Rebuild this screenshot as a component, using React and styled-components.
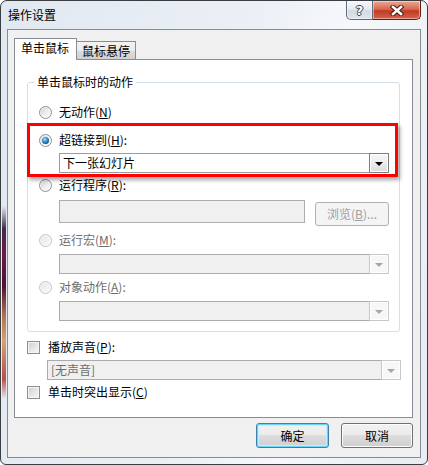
import styled, { createGlobalStyle } from 'styled-components'

const GlobalStyle = createGlobalStyle`
  html, body {
    margin: 0;
    padding: 0;
    background: #fff;
  }
  body {
    font-family: "Noto Sans CJK SC", "Microsoft YaHei", sans-serif;
    font-size: 12px;
    color: #000;
  }
  * { box-sizing: border-box; }
`

const Window = styled.div`
  width: 428px;
  height: 465px;
  border: 1px solid #3a3d42;
  border-radius: 7px 7px 6px 6px;
  padding: 0 6px 6px;
  display: flex;
  flex-direction: column;
  overflow: hidden;
  background:
    linear-gradient(
      to bottom,
      rgba(60, 40, 70, 0) 205px,
      #3f2c4c 228px,
      #6c1b48 252px,
      #4e1232 285px,
      #b27352 315px,
      #d6a173 340px,
      #b9504a 378px,
      rgba(230, 236, 243, 0) 398px
    ) 1px 0 / 4px 100% no-repeat,
    linear-gradient(100deg, #e1e8f0 0%, #ebf0f6 50%, #f6f8fb 70%, #e6ecf3 100%);
`

const TitleBar = styled.div`
  height: 28px;
  display: flex;
  align-items: flex-start;
`

const Title = styled.div`
  padding-left: 1px;
  line-height: 28px;
  font-size: 12px;
`

const Captions = styled.div`
  margin-left: auto;
  display: flex;
  height: 19px;
`

const CaptionButton = styled.div`
  width: ${p => p.$w}px;
  height: 19px;
  display: flex;
  align-items: center;
  justify-content: center;
  border: 1px solid ${p => (p.$close ? '#5c1f14' : '#5f6b7a')};
  border-top: none;
  border-left: ${p => (p.$close ? 'none' : '1px solid #5f6b7a')};
  border-radius: ${p => (p.$close ? '0 0 5px 0' : '0 0 0 5px')};
  background: ${p =>
    p.$close
      ? 'linear-gradient(#e9a996 0%, #d86a50 45%, #c23b22 55%, #d4634a 100%)'
      : 'linear-gradient(#f6f8fb 0%, #e6eaf0 45%, #d3dae3 55%, #dfe5ec 100%)'};
  box-shadow: inset 0 0 0 1px rgba(255, 255, 255, 0.45);
`

const HelpGlyph = styled.span`
  font-family: "DejaVu Sans", sans-serif;
  font-weight: bold;
  font-size: 13px;
  line-height: 13px;
  color: #fff;
  text-shadow: 1px 0 #3b4450, -1px 0 #3b4450, 0 1px #3b4450, 0 -1px #3b4450;
`

const Client = styled.div`
  flex: 1;
  border: 1px solid #878c93;
  background: #f0f0f0;
  padding: 8px 7px 0 6px;
  display: flex;
  flex-direction: column;
`

const TabRow = styled.div`
  display: flex;
  align-items: flex-end;
  position: relative;
  z-index: 1;
  margin-bottom: -1px;
`

const Tab = styled.div`
  position: relative;
  border: 1px solid #898c95;
  border-bottom: none;
  line-height: 16px;
  white-space: nowrap;
  ${p =>
    p.$active
      ? `
    z-index: 2;
    height: 22px;
    padding: 1px 7px 0 6px;
    background: #fff;
  `
      : `
    height: 18px;
    margin-left: -1px;
    margin-bottom: 1px;
    padding: 1px 5px 0 5px;
    background: linear-gradient(#f3f3f3 0%, #ebebeb 50%, #dddddd 51%, #cfcfcf 100%);
  `}
`

const Panel = styled.div`
  background: #fff;
  border: 1px solid #898c95;
  padding: 0 12px 15px;
  display: flex;
  flex-direction: column;
`

const GroupBox = styled.div`
  position: relative;
  margin-top: 22px;
  border: 1px solid #d5dfe5;
  border-radius: 3px;
  padding: 19px 10px 10px 11px;
  display: flex;
  flex-direction: column;
`

const Legend = styled.div`
  position: absolute;
  top: -9px;
  left: 6px;
  padding: 0 3px;
  background: #fff;
  line-height: 16px;
`

const Highlight = styled.div`
  position: absolute;
  left: -1px;
  top: 40px;
  width: 371px;
  height: 54px;
  border: 3px solid #ff0000;
  box-shadow: 2px 3px 4px rgba(0, 0, 0, 0.35);
  pointer-events: none;
`

const OptionRow = styled.div`
  display: flex;
  align-items: center;
  height: 20px;
  gap: ${p => (p.$check ? 8 : 7)}px;
  margin-top: ${p => p.$mt || 0}px;
  color: ${p => (p.$disabled ? '#6d6d6d' : '#000')};
  line-height: 20px;
  white-space: nowrap;
`

const Radio = styled.span`
  position: relative;
  width: 13px;
  height: 13px;
  flex: none;
  border-radius: 50%;
  border: 1px solid ${p => (p.$disabled ? '#c2c4c6' : '#8e9194')};
  background: ${p =>
    p.$disabled
      ? 'linear-gradient(135deg, #e6e6e6, #fafafa)'
      : 'linear-gradient(135deg, #cfd1d3 0%, #eeeeee 55%, #ffffff 100%)'};
  box-shadow: inset 0 0 0 1px rgba(255, 255, 255, 0.6);

  &::after {
    content: '';
    display: ${p => (p.$checked ? 'block' : 'none')};
    position: absolute;
    left: 2px;
    top: 2px;
    width: 7px;
    height: 7px;
    border-radius: 50%;
    background: radial-gradient(circle at 40% 35%, #a9e3ff 0%, #3a8fd0 40%, #144a80 75%, #0c2f56 100%);
  }
`

const CheckBox = styled.span`
  width: 13px;
  height: 13px;
  flex: none;
  border: 1px solid #8f8f8f;
  background: linear-gradient(135deg, #cbcbcb 0%, #e8e8e8 55%, #f8f8f8 100%);
  box-shadow: inset 0 0 0 1px #f4f4f4;
`

const U = styled.span`
  text-decoration: underline;
  text-underline-offset: 1px;
`

const Combo = styled.div`
  display: flex;
  width: ${p => p.$w}px;
  height: 20px;
  margin-top: ${p => p.$mt || 0}px;
  margin-left: 20px;
  border: 1px solid ${p => (p.$disabled ? '#a9abae' : '#9c9c9c')};
  background: ${p => (p.$disabled ? '#f0f0f0' : '#fff')};
  color: ${p => (p.$disabled ? '#6d6d6d' : '#000')};
`

const ComboText = styled.div`
  flex: 1;
  padding-left: 3px;
  line-height: 18px;
  white-space: nowrap;
`

const ComboArrow = styled.div`
  width: 20px;
  margin: -1px -1px -1px 0;
  display: flex;
  align-items: center;
  justify-content: center;
  border: 1px solid ${p => (p.$disabled ? '#c6c8ca' : '#7d7d7d')};
  background: ${p =>
    p.$disabled ? '#f7f7f7' : 'linear-gradient(#f7f7f7 0%, #ececec 50%, #dcdcdc 100%)'};
  box-shadow: inset 0 0 0 1px #fff;

  &::after {
    content: '';
    width: 0;
    height: 0;
    border-left: 4px solid transparent;
    border-right: 4px solid transparent;
    border-top: 4px solid ${p => (p.$disabled ? '#a6a6a6' : '#000')};
    margin-top: 1px;
  }
`

const ProgramRow = styled.div`
  display: flex;
  align-items: flex-start;
  height: 26px;
  margin-top: 5px;
  margin-left: 20px;
`

const TextField = styled.div`
  width: 246px;
  height: 23px;
  border: 1px solid #abadb3;
  background: #f0f0f0;
`

const BrowseButton = styled.div`
  width: 74px;
  height: 24px;
  margin: 2px 0 0 10px;
  border: 1px solid #adb2b5;
  border-radius: 3px;
  background: #f4f4f4;
  color: #a0a0a0;
  text-align: center;
  line-height: 22px;
`

const ButtonRow = styled.div`
  display: flex;
  justify-content: flex-end;
  gap: 12px;
  margin-top: 5px;
`

const Button = styled.div`
  width: ${p => p.$w}px;
  height: 25px;
  border: 1px solid ${p => (p.$default ? '#3c7fb1' : '#707070')};
  border-radius: 3px;
  background: linear-gradient(#f2f2f2 0%, #ebebeb 49%, #dddddd 50%, #cfcfcf 100%);
  box-shadow: ${p =>
    p.$default ? 'inset 0 0 0 1px #6ad3f6, inset 0 0 0 2px #c8eefb' : 'inset 0 0 0 1px #fcfcfc'};
  text-align: center;
  line-height: 23px;
`

function CloseGlyph() {
  return (
    <svg width="14" height="11" viewBox="0 0 14 11">
      <path d="M3 2 L11 9 M11 2 L3 9" stroke="#4a1d15" strokeWidth="4.6" strokeLinecap="square" fill="none" />
      <path d="M3 2 L11 9 M11 2 L3 9" stroke="#fff" strokeWidth="2.6" strokeLinecap="square" fill="none" />
    </svg>
  )
}

const App = () => {
  return (
    <>
      <GlobalStyle />
      <Window>
        <TitleBar>
          <Title>操作设置</Title>
          <Captions>
            <CaptionButton $w={27}>
              <HelpGlyph>?</HelpGlyph>
            </CaptionButton>
            <CaptionButton $w={48} $close>
              <CloseGlyph />
            </CaptionButton>
          </Captions>
        </TitleBar>

        <Client>
          <TabRow>
            <Tab $active>单击鼠标</Tab>
            <Tab>鼠标悬停</Tab>
          </TabRow>

          <Panel>
            <GroupBox>
              <Legend>单击鼠标时的动作</Legend>

              <OptionRow>
                <Radio />
                <span>无动作(<U>N</U>)</span>
              </OptionRow>

              <OptionRow $mt={8}>
                <Radio $checked />
                <span>超链接到(<U>H</U>):</span>
              </OptionRow>
              <Combo $w={330} $mt={3}>
                <ComboText>下一张幻灯片</ComboText>
                <ComboArrow />
              </Combo>

              <OptionRow $mt={2}>
                <Radio />
                <span>运行程序(<U>R</U>):</span>
              </OptionRow>
              <ProgramRow>
                <TextField />
                <BrowseButton>浏览(<U>B</U>)...</BrowseButton>
              </ProgramRow>

              <OptionRow $mt={4} $disabled>
                <Radio $disabled />
                <span>运行宏(<U>M</U>):</span>
              </OptionRow>
              <Combo $w={330} $mt={4} $disabled>
                <ComboText />
                <ComboArrow $disabled />
              </Combo>

              <OptionRow $mt={3} $disabled>
                <Radio $disabled />
                <span>对象动作(<U>A</U>):</span>
              </OptionRow>
              <Combo $w={330} $mt={4} $disabled>
                <ComboText />
                <ComboArrow $disabled />
              </Combo>

              <Highlight />
            </GroupBox>

            <OptionRow $mt={5} $check>
              <CheckBox />
              <span>播放声音(<U>P</U>):</span>
            </OptionRow>
            <Combo $w={354} $mt={3} $disabled>
              <ComboText>[无声音]</ComboText>
              <ComboArrow $disabled />
            </Combo>
            <OptionRow $mt={2} $check>
              <CheckBox />
              <span>单击时突出显示(<U>C</U>)</span>
            </OptionRow>
          </Panel>

          <ButtonRow>
            <Button $w={73} $default>确定</Button>
            <Button $w={72}>取消</Button>
          </ButtonRow>
        </Client>
      </Window>
    </>
  )
}

export default App
